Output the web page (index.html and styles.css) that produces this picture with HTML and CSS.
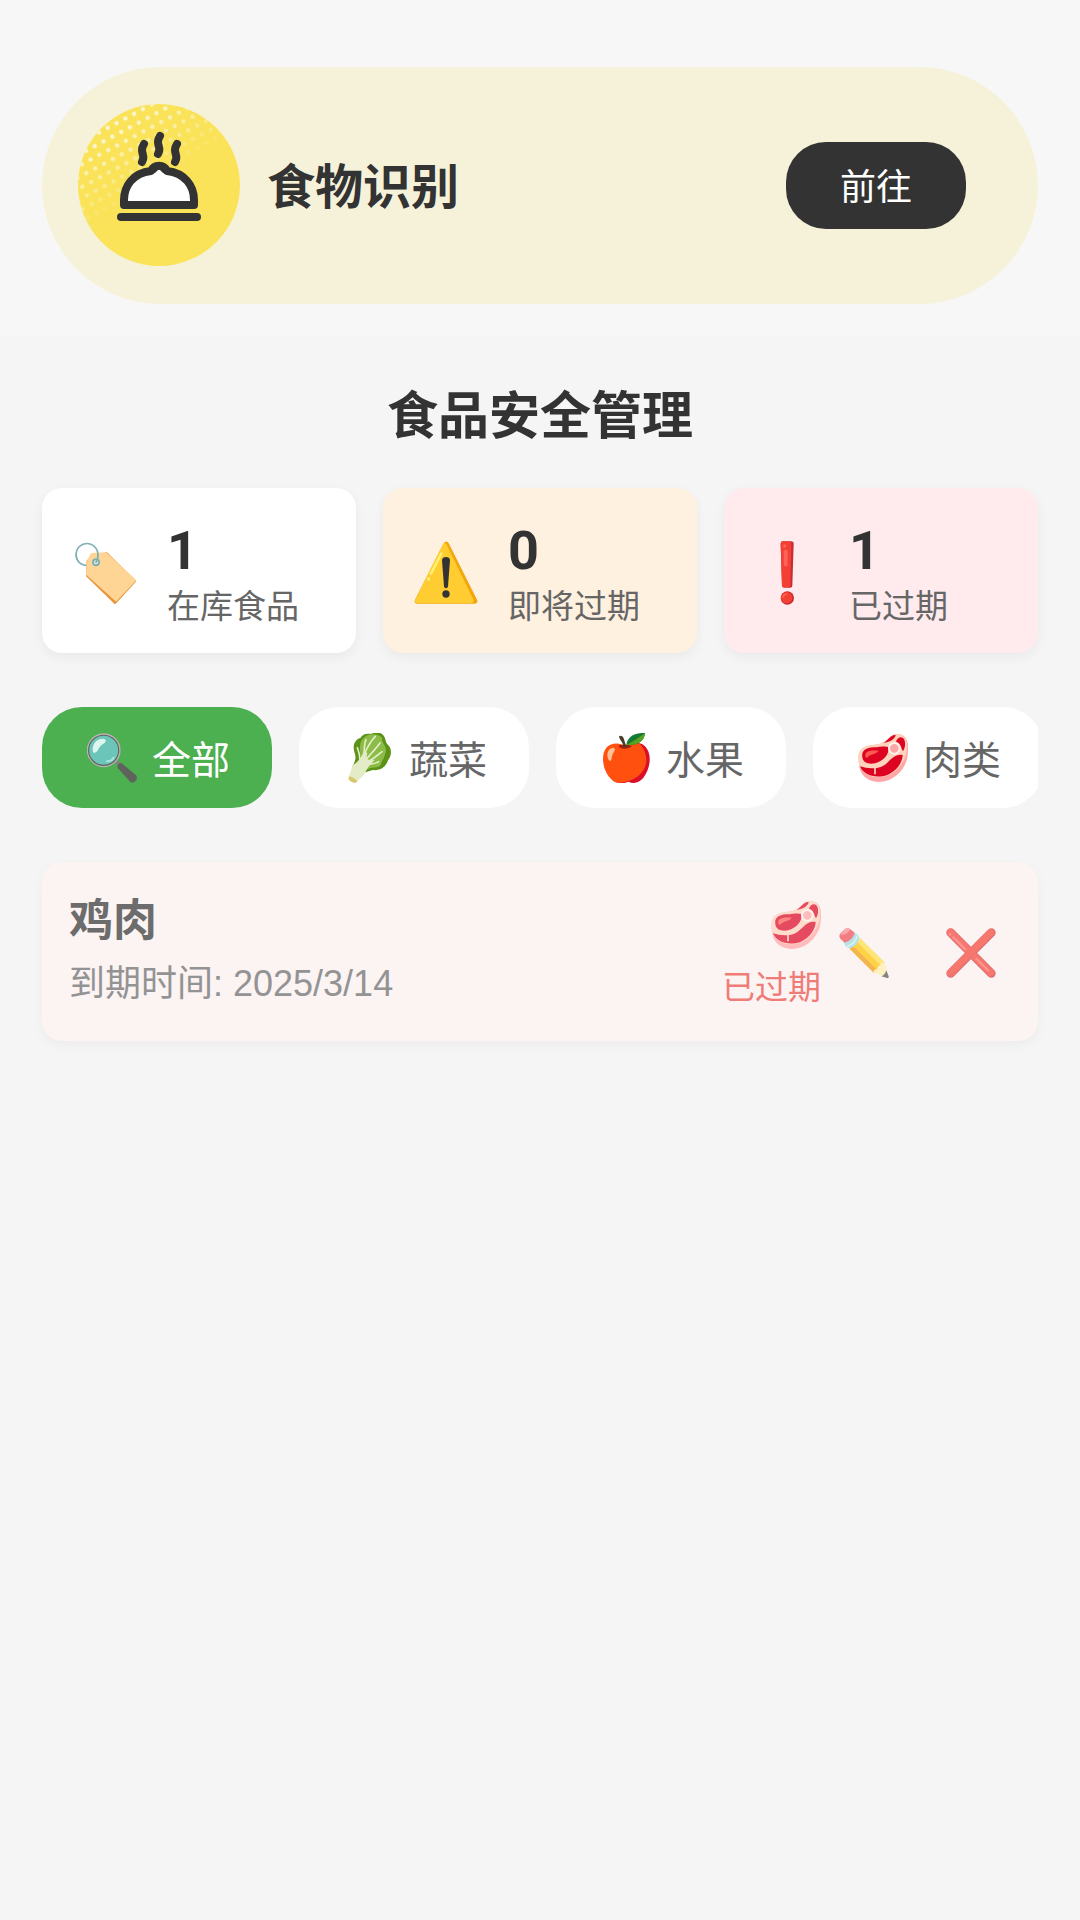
FILE: index.html
```
<!DOCTYPE html>
<html lang="zh-CN">

<head>
    <meta charset="UTF-8">
    <meta name="viewport" content="width=device-width, initial-scale=1.0">
    <title>食品安全管理</title>
    <link rel="stylesheet" href="styles.css">
</head>

<body>
    <!-- shared icon used by the filter and the list -->
    <svg class="defs" width="0" height="0" aria-hidden="true">
        <symbol id="meat" viewBox="0 0 150 150">
            <path fill="#ffa6a6" d="M4 92 C-4 70 6 42 36 38 C66 33 78 30 90 18 C102 4 116 0 132 6 C152 16 152 40 149 66 C146 104 112 146 62 147 C24 147 2 120 4 92Z" />
            <path fill="#ffd3bc" d="M1 80 C-2 54 12 38 40 36 C66 34 76 30 90 17 C102 4 112 2 124 4 C148 12 150 34 146 58 C140 88 112 131 62 133 C22 132 2 108 1 80Z" />
            <path fill="#dd0422" d="M6 100 C28 107 56 109 76 98 C98 86 104 62 134 66 C134 84 120 112 88 126 C52 138 16 126 6 100Z" />
            <path fill="#dd0422" d="M13 72 C10 54 22 45 46 43 C68 42 80 38 92 42 C92 58 88 72 66 85 C48 96 15 96 13 72Z" />
            <path fill="#dd0422" d="M114 26 C118 12 132 8 139 20 C144 32 140 48 135 54 C129 48 130 30 114 26Z" />
            <path fill="#dd0422" d="M76 29 C90 24 98 4 113 6 C112 16 98 28 76 29Z" />
            <path fill="#ff5a50" d="M22 70 C20 56 34 50 62 53 C52 66 38 62 30 72 C27 76 22 75 22 70Z" />
            <path fill="none" stroke="#ffd3bc" stroke-width="5" d="M51 104 V124" />
            <circle cx="109" cy="46" r="16" fill="#ffa6a6" stroke="#fff0ec" stroke-width="6" />
        </symbol>
    </svg>

    <header class="top">
        <section class="banner">
            <svg class="banner-icon" viewBox="0 0 162 162" aria-hidden="true">
                <defs>
                    <pattern id="dots" width="10" height="10" patternUnits="userSpaceOnUse" patternTransform="rotate(-28)">
                        <circle cx="5" cy="5" r="2.2" fill="#fbf6cf" />
                    </pattern>
                    <linearGradient id="fade" x1="0.15" y1="0.1" x2="0.45" y2="0.55">
                        <stop offset="0.2" stop-color="#fff" />
                        <stop offset="1" stop-color="#000" />
                    </linearGradient>
                    <mask id="dot-mask">
                        <rect width="162" height="162" fill="url(#fade)" />
                    </mask>
                </defs>
                <circle cx="81" cy="81" r="81" fill="#fae359" />
                <circle cx="81" cy="81" r="81" fill="url(#dots)" mask="url(#dot-mask)" />
                <g fill="none" stroke="#333" stroke-width="8" stroke-linecap="round" stroke-linejoin="round">
                    <path d="M66 40 C63 45 64 47 65 51 C66 54 64 58 64 58" />
                    <path d="M82 32 C79 37 80 39 81 43 C82 46 80 50 80 50" />
                    <path d="M99 40 C96 45 97 47 98 51 C99 54 97 58 97 58" />
                    <path fill="#fff" d="M46 101 H116 V96 C116 82 107 69 89 67 C86 60 76 60 73 67 C55 69 46 82 46 96Z" />
                    <path d="M43 113 H119" />
                </g>
                <path fill="#333" d="M73 62 H89 L93 71 Q85 70 83 67 Q81 64 79 67 Q77 70 69 71Z" />
            </svg>
            <h2>食物识别</h2>
            <button type="button" class="go">前往</button>
        </section>
    </header>

    <main class="content">
        <h1>食品安全管理</h1>

        <section class="stats">
            <div class="stat">
                <svg class="stat-icon" viewBox="0 0 192 192" aria-hidden="true">
                    <path fill="#e8963c" d="M44 60 L94 38 L101 37 L186 121 L126 186 L42 104Z" stroke="#e8963c" stroke-width="6" stroke-linejoin="round" />
                    <path fill="#fed595" d="M46 58 L56 39 L98 37 L186 118 L129 178 L42 100Z" stroke="#fed595" stroke-width="6" stroke-linejoin="round" />
                    <circle cx="69" cy="64" r="9" fill="#fff3df" stroke="#7fb0b3" stroke-width="6" />
                    <path fill="none" stroke="#7fb0b3" stroke-width="5" d="M40 73 C16 72 6 50 10 34 C15 10 42 1 60 13 C76 24 80 46 68 66" />
                </svg>
                <div class="stat-text">
                    <strong>1</strong>
                    <span>在库食品</span>
                </div>
            </div>
            <div class="stat soon">
                <svg class="stat-icon" viewBox="0 0 192 192" aria-hidden="true">
                    <path fill="#f2a60d" stroke="#f2a60d" stroke-width="16" stroke-linejoin="round" d="M97 10 L182 180 H10Z" />
                    <path fill="#ffcc32" stroke="#ffcc32" stroke-width="14" stroke-linejoin="round" d="M92 14 L172 179 H10Z" />
                    <path fill="none" stroke="#fff170" stroke-width="8" stroke-linecap="round" d="M82 38 L51 98" />
                    <circle cx="44" cy="114" r="5" fill="#fff170" />
                    <path fill="#333" d="M84 58 C84 45 108 45 108 58 L102 136 C101 144 91 144 90 136Z" />
                    <circle cx="96" cy="159" r="11" fill="#333" />
                </svg>
                <div class="stat-text">
                    <strong>0</strong>
                    <span>即将过期</span>
                </div>
            </div>
            <div class="stat expired">
                <svg class="stat-icon" viewBox="0 0 192 192" aria-hidden="true">
                    <path fill="#c62c35" d="M77 8 Q77 1 84 1 H108 Q116 1 116 8 L112 134 Q112 140 105 140 H88 Q81 140 81 134Z" />
                    <path fill="#f44034" d="M77 8 Q77 1 84 1 H104 Q109 1 109 8 L106 134 Q106 138 102 138 H88 Q81 138 81 134Z" />
                    <rect x="86" y="26" width="12" height="50" rx="5" fill="#ff6257" />
                    <circle cx="89" cy="15" r="5" fill="#ff6257" />
                    <circle cx="97" cy="171" r="20" fill="#c62c35" />
                    <circle cx="95" cy="170" r="17" fill="#f44034" />
                    <path fill="none" stroke="#ff6257" stroke-width="5" stroke-linecap="round" d="M84 168 Q86 160 94 159" />
                </svg>
                <div class="stat-text">
                    <strong>1</strong>
                    <span>已过期</span>
                </div>
            </div>
        </section>

        <nav class="filters">
            <button type="button" class="filter active">
                <svg class="icon" viewBox="0 0 150 150" aria-hidden="true">
                    <path fill="#82857d" d="M82 88 L90 80 L104 94 L96 102Z" />
                    <path fill="#60625c" d="M91 97 Q96 88 104 91 L147 127 Q153 134 146 143 Q138 153 130 147 L93 106Z" />
                    <circle cx="50" cy="52" r="47" fill="#6bc5b8" stroke="#62655d" stroke-width="7" />
                    <circle cx="50" cy="52" r="49" fill="none" stroke="#b5b8b2" stroke-width="4" />
                    <path fill="#ddf5ef" d="M17 52 C16 30 32 14 52 18 C66 28 42 32 36 46 C28 62 18 64 17 52Z" />
                    <path fill="none" stroke="#a9e5dc" stroke-width="6" stroke-linecap="round" d="M60 85 Q76 84 80 74" />
                </svg>
                <span>全部</span>
            </button>
            <button type="button" class="filter">
                <svg class="icon" viewBox="0 0 150 150" aria-hidden="true">
                    <path fill="#5c9216" d="M32 60 C26 44 28 20 50 14 C56 4 66 0 80 3 C92 -3 112 -3 118 7 C126 18 124 26 130 34 C142 42 146 66 132 82 C126 102 108 114 86 111 L50 122 L24 102 C32 88 38 76 32 60Z" />
                    <path fill="#8cbc48" d="M50 74 C48 50 44 28 58 16 C68 2 98 -2 114 14 C112 30 130 40 125 58 C122 74 114 82 110 96 C100 108 86 100 72 108 L44 122 L26 104Z" />
                    <path fill="#e3ecc7" d="M26 96 C42 88 52 74 60 54 L70 60 C64 84 74 82 92 80 C80 92 70 104 62 122 C54 134 44 138 34 149 L14 134Z" />
                    <g fill="none" stroke="#e3ecc7" stroke-width="5" stroke-linecap="round">
                        <path d="M50 90 C64 58 70 34 94 10" />
                        <path d="M61 64 C60 44 60 34 66 20" />
                        <path d="M58 90 C76 66 92 52 108 30" />
                        <path d="M64 90 C84 82 98 68 114 56" />
                        <path d="M60 98 C84 90 94 94 104 86" />
                        <path d="M48 82 C48 64 44 54 40 44" />
                    </g>
                    <path fill="#d9c76c" d="M16 130 Q28 132 41 144 L34 150 Q20 148 13 137Z" />
                </svg>
                <span>蔬菜</span>
            </button>
            <button type="button" class="filter">
                <svg class="icon" viewBox="0 0 150 150" aria-hidden="true">
                    <path fill="#dc0d28" d="M76 40 C92 28 114 24 130 38 C154 58 150 106 126 136 C112 152 96 152 82 146 C64 154 48 152 34 140Z" />
                    <path fill="#ff5010" d="M74 40 C56 28 32 28 18 42 C-4 66 6 118 34 142 C46 152 62 150 74 146 C108 140 138 112 136 78 C134 58 128 44 116 32 C98 26 86 34 74 40Z" />
                    <path fill="#9c230d" d="M52 38 Q72 30 94 39 Q82 49 68 47 Q54 45 52 38Z" />
                    <path fill="#493c27" d="M54 10 Q64 4 68 16 L76 42 L68 42 C66 28 56 22 54 10Z" />
                    <path fill="#147a35" d="M76 36 C78 14 98 -2 132 0 C130 24 112 38 76 36Z" />
                    <path fill="#58a321" d="M76 36 C94 28 112 14 132 1 C130 24 112 38 76 36Z" />
                    <path fill="#ffc195" d="M24 82 C14 66 20 48 34 44 C52 46 34 56 32 74 C31 84 27 86 24 82Z" />
                </svg>
                <span>水果</span>
            </button>
            <button type="button" class="filter">
                <svg class="icon" aria-hidden="true"><use href="#meat" /></svg>
                <span>肉类</span>
            </button>
        </nav>

        <ul class="food-list">
            <li class="food">
                <div class="food-info">
                    <h3>鸡肉</h3>
                    <p>到期时间: 2025/3/14</p>
                </div>
                <div class="food-status">
                    <svg class="icon" aria-hidden="true"><use href="#meat" /></svg>
                    <span>已过期</span>
                </div>
                <div class="food-actions">
                    <button type="button" aria-label="编辑">
                        <svg class="icon" viewBox="0 0 150 150" aria-hidden="true">
                            <path fill="#ffc400" d="M32 62 L63 31 L137 104 L105 135Z" />
                            <path fill="#ffe040" d="M53 41 L63 31 L137 104 L126 114Z" />
                            <path fill="#f29a0c" d="M32 62 L40 54 L113 127 L105 135Z" />
                            <path fill="none" stroke="#e8930a" stroke-width="3" d="M44 58 L110 124" />
                            <path fill="#fff0ac" d="M98 131 Q106 136 107 124 Q116 127 117 114 Q127 116 126 104 Q137 106 136 100 L148 146 Q150 151 144 149Z" />
                            <path fill="#555" d="M142 127 L149 145 Q150 151 144 150 L127 145 Q138 141 142 127Z" />
                            <path fill="#9adce1" d="M15 42 L42 14 Q60 16 61 30 Q54 58 30 61 Q17 56 15 42Z" />
                            <path fill="none" stroke="#d8f3f4" stroke-width="4" d="M24 56 Q50 46 55 22" />
                            <path fill="#ee4c55" d="M4 32 Q-3 23 6 14 L16 5 Q25 -3 34 4 L47 14 Q42 36 17 44Z" />
                            <path fill="#f98990" d="M4 22 L16 5 Q25 -3 34 4 Q26 20 4 22Z" />
                        </svg>
                    </button>
                    <button type="button" aria-label="删除">
                        <svg class="icon" viewBox="0 0 150 150" aria-hidden="true">
                            <path fill="none" stroke="#d5383a" stroke-width="26" stroke-linecap="round" d="M14 14 L136 136 M136 14 L14 136" />
                            <path fill="none" stroke="#f44336" stroke-width="21" stroke-linecap="round" d="M13 13 L134 134 M134 14 L13 135" />
                            <path fill="none" stroke="#ff6b68" stroke-width="7" stroke-linecap="round" d="M22 28 L58 64 M92 93 L126 127" />
                            <circle cx="12" cy="19" r="4" fill="#ff6b68" />
                        </svg>
                    </button>
                </div>
            </li>
        </ul>
    </main>
</body>

</html>
```
FILE: styles.css
```
* {
    box-sizing: border-box;
}

body {
    margin: 0;
    background-color: #f5f5f5;
    color: #333;
    font-family: Roboto, "Noto Sans CJK SC", sans-serif;
}

h1,
h2,
h3,
p,
ul {
    margin: 0;
    padding: 0;
}

button {
    border: none;
    font-family: inherit;
    cursor: pointer;
}

.defs {
    position: absolute;
}

.icon {
    display: block;
    flex: none;
    width: 50px;
    height: 50px;
}

/* banner */
.top {
    padding: 67px 42px 32px;
    background-color: #f7f7f7;
}

.banner {
    display: flex;
    align-items: center;
    gap: 27px;
    padding: 37px 72px 38px 36px;
    border-radius: 119px;
    background-color: #f6f2da;
}

.banner-icon {
    flex: none;
    width: 162px;
    height: 162px;
}

.banner h2 {
    flex: 1;
    padding-top: 6px;
    font-size: 48px;
    line-height: 60px;
}

.go {
    width: 180px;
    height: 87px;
    padding-bottom: 3px;
    border-radius: 40px;
    background-color: #333;
    color: white;
    font-size: 36px;
}

/* content */
.content {
    padding: 45px 42px;
}

h1 {
    margin-bottom: 35px;
    font-size: 51px;
    line-height: 72px;
    text-align: center;
}

.stats {
    display: grid;
    grid-template-columns: repeat(3, 1fr);
    gap: 27px;
    margin-bottom: 54px;
}

.stat {
    display: flex;
    align-items: center;
    gap: 30px;
    height: 165px;
    padding: 4px 31px 0;
    border-radius: 20px;
    background-color: white;
    box-shadow: 0 4px 12px rgba(0, 0, 0, 0.05);
}

.stat.soon {
    background-color: #fff1df;
}

.stat.expired {
    background-color: #ffebed;
}

.stat-icon {
    flex: none;
    width: 64px;
    height: 64px;
}

.stat-text {
    display: flex;
    flex-direction: column;
    padding-top: 4px;
}

.stat-text strong {
    font-size: 54px;
    line-height: 64px;
}

.stat-text span {
    color: #666;
    font-size: 33px;
    line-height: 48px;
    white-space: nowrap;
}

/* category filter, scrolls sideways */
.filters {
    display: flex;
    gap: 27px;
    margin-bottom: 54px;
    overflow-x: auto;
    scrollbar-width: none;
}

.filter {
    display: flex;
    flex: none;
    align-items: center;
    gap: 15px;
    height: 101px;
    padding: 0 42px 0 45px;
    border-radius: 40px;
    background-color: white;
    color: #666;
    font-size: 39px;
}

.filter span {
    padding-bottom: 2px;
}

.filter.active {
    background-color: #4caf50;
    color: white;
}

/* list */
.food-list {
    list-style: none;
}

.food {
    display: flex;
    align-items: center;
    padding: 27px 24px 27px 27px;
    border-radius: 20px;
    background-color: #fcf3f3;
    box-shadow: 0 4px 12px rgba(0, 0, 0, 0.04);
}

.food .icon {
    opacity: 0.7;
}

.food-info {
    flex: 1;
}

.food-info h3 {
    color: #6c6c6c;
    font-size: 44px;
    line-height: 64px;
}

.food-info p {
    color: #939393;
    font-family: "Liberation Sans", "Noto Sans CJK SC", sans-serif;
    font-size: 36px;
    line-height: 61px;
}

.food-status {
    display: flex;
    flex-direction: column;
    align-items: flex-end;
    gap: 14px;
    padding-top: 8px;
    color: #f07c78;
    font-size: 33px;
    line-height: 48px;
}

.food-actions {
    display: flex;
    gap: 21px;
}

.food-actions button {
    padding: 18px 18px 16px;
    background: none;
}
```
